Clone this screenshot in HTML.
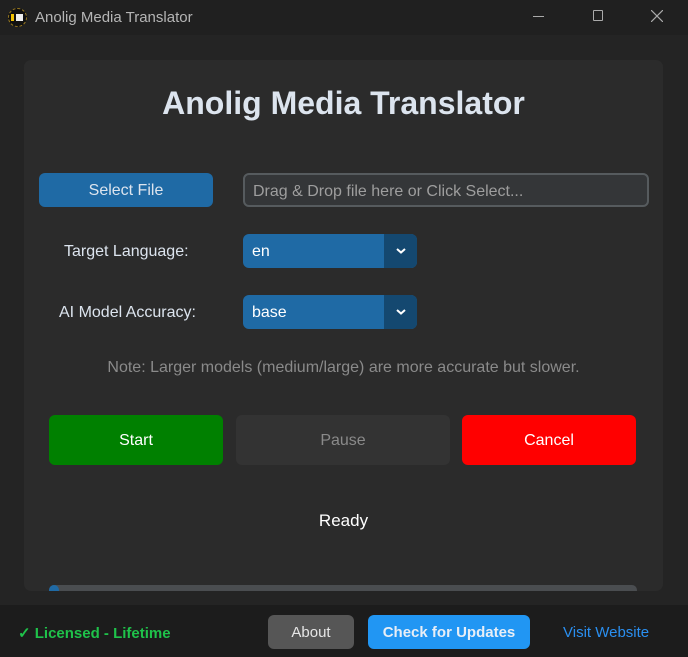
<!DOCTYPE html>
<html><head><style>
*{margin:0;padding:0;box-sizing:border-box}
body{width:688px;height:657px;background:#242424;font-family:"Liberation Sans",Arial,sans-serif;position:relative;overflow:hidden;color:#dce4ee}
.abs{position:absolute}
.tb{left:0;top:0;width:688px;height:35px;background:#202020}
.panel{left:24px;top:60px;width:639px;height:531px;background:#2b2b2b;border-radius:7px;overflow:hidden}
.btn{display:flex;align-items:center;justify-content:center;border-radius:6px;font-size:16px;padding-top:1px}
.foot{left:0;top:605px;width:688px;height:52px;background:#1c1c1c}
.dd{background:#1f6aa5;border-radius:6px;font-size:16px;color:#fff;padding-left:9px;padding-top:1px;display:flex;align-items:center;overflow:hidden}
.arr{position:absolute;right:0;top:0;width:33px;height:100%;background:#144870;display:flex;align-items:center;justify-content:center}
</style></head><body>
<div class="abs tb"></div>
<div class="abs" style="left:8px;top:8px;width:19px;height:19px;border-radius:50%;border:1px dashed #9a7a20;background:#111"></div>
<div class="abs" style="left:11px;top:14px;width:3px;height:7px;background:#f2c200"></div>
<div class="abs" style="left:16px;top:14px;width:7px;height:7px;background:#eee"></div>
<div class="abs" style="left:35px;top:9px;font-size:15px;color:#b5b5b5">Anolig Media Translator</div>
<div class="abs" style="left:533px;top:16px;width:11px;height:1px;background:#aaa"></div>
<div class="abs" style="left:593px;top:10px;width:10px;height:11px;border:1px solid #aaa;border-radius:1px"></div>
<svg class="abs" style="left:651px;top:10px" width="12" height="12"><path d="M0 0L12 12M12 0L0 12" stroke="#aaa" stroke-width="1.2"/></svg>
<div class="abs panel">
<div class="abs" style="left:0;width:639px;top:25px;text-align:center;font-size:32px;font-weight:bold;color:#dce4ee">Anolig Media Translator</div>
<div class="abs btn" style="left:15px;top:113px;width:174px;height:34px;background:#1f6aa5;color:#dce4ee">Select File</div>
<div class="abs" style="left:219px;top:113px;width:406px;height:34px;border:2px solid #565b5e;border-radius:6px;background:#343638;color:#9e9e9e;font-size:16px;padding:8px 8px">Drag &amp; Drop file here or Click Select...</div>
<div class="abs" style="left:40px;top:183px;font-size:16px">Target Language:</div>
<div class="abs dd" style="left:219px;top:174px;width:174px;height:34px">en<div class="arr"><svg width="10" height="6"><path d="M1 1L5 4.5L9 1" stroke="#fff" stroke-width="2" fill="none"/></svg></div></div>
<div class="abs" style="left:35px;top:244px;font-size:16px">AI Model Accuracy:</div>
<div class="abs dd" style="left:219px;top:235px;width:174px;height:34px">base<div class="arr"><svg width="10" height="6"><path d="M1 1L5 4.5L9 1" stroke="#fff" stroke-width="2" fill="none"/></svg></div></div>
<div class="abs" style="left:0;width:639px;top:299px;text-align:center;font-size:16px;color:#8a8a8a">Note: Larger models (medium/large) are more accurate but slower.</div>
<div class="abs btn" style="left:25px;top:355px;width:174px;height:50px;background:#008000;color:#fff">Start</div>
<div class="abs btn" style="left:212px;top:355px;width:214px;height:50px;background:#333333;color:#8a8a8a">Pause</div>
<div class="abs btn" style="left:438px;top:355px;width:174px;height:50px;background:#ff0000;color:#fff">Cancel</div>
<div class="abs" style="left:0;width:639px;top:451px;text-align:center;font-size:17px;color:#fff">Ready</div>
<div class="abs" style="left:25px;top:525px;width:588px;height:10px;background:#4a4d50;border-radius:5px"></div>
<div class="abs" style="left:25px;top:525px;width:10px;height:10px;background:#1f6aa5;border-radius:5px"></div>
</div>
<div class="abs foot"></div>
<div class="abs" style="left:18px;top:624px;font-size:15px;font-weight:bold;color:#1fc24a">✓ Licensed - Lifetime</div>
<div class="abs btn" style="left:268px;top:615px;width:86px;height:34px;background:#565656;color:#e6e6e6;font-size:15px">About</div>
<div class="abs btn" style="left:368px;top:615px;width:162px;height:34px;background:#2196f3;color:#e8eef6;font-size:15px;font-weight:bold">Check for Updates</div>
<div class="abs" style="left:563px;top:624px;font-size:15px;color:#2a8ff0">Visit Website</div>
</body></html>
